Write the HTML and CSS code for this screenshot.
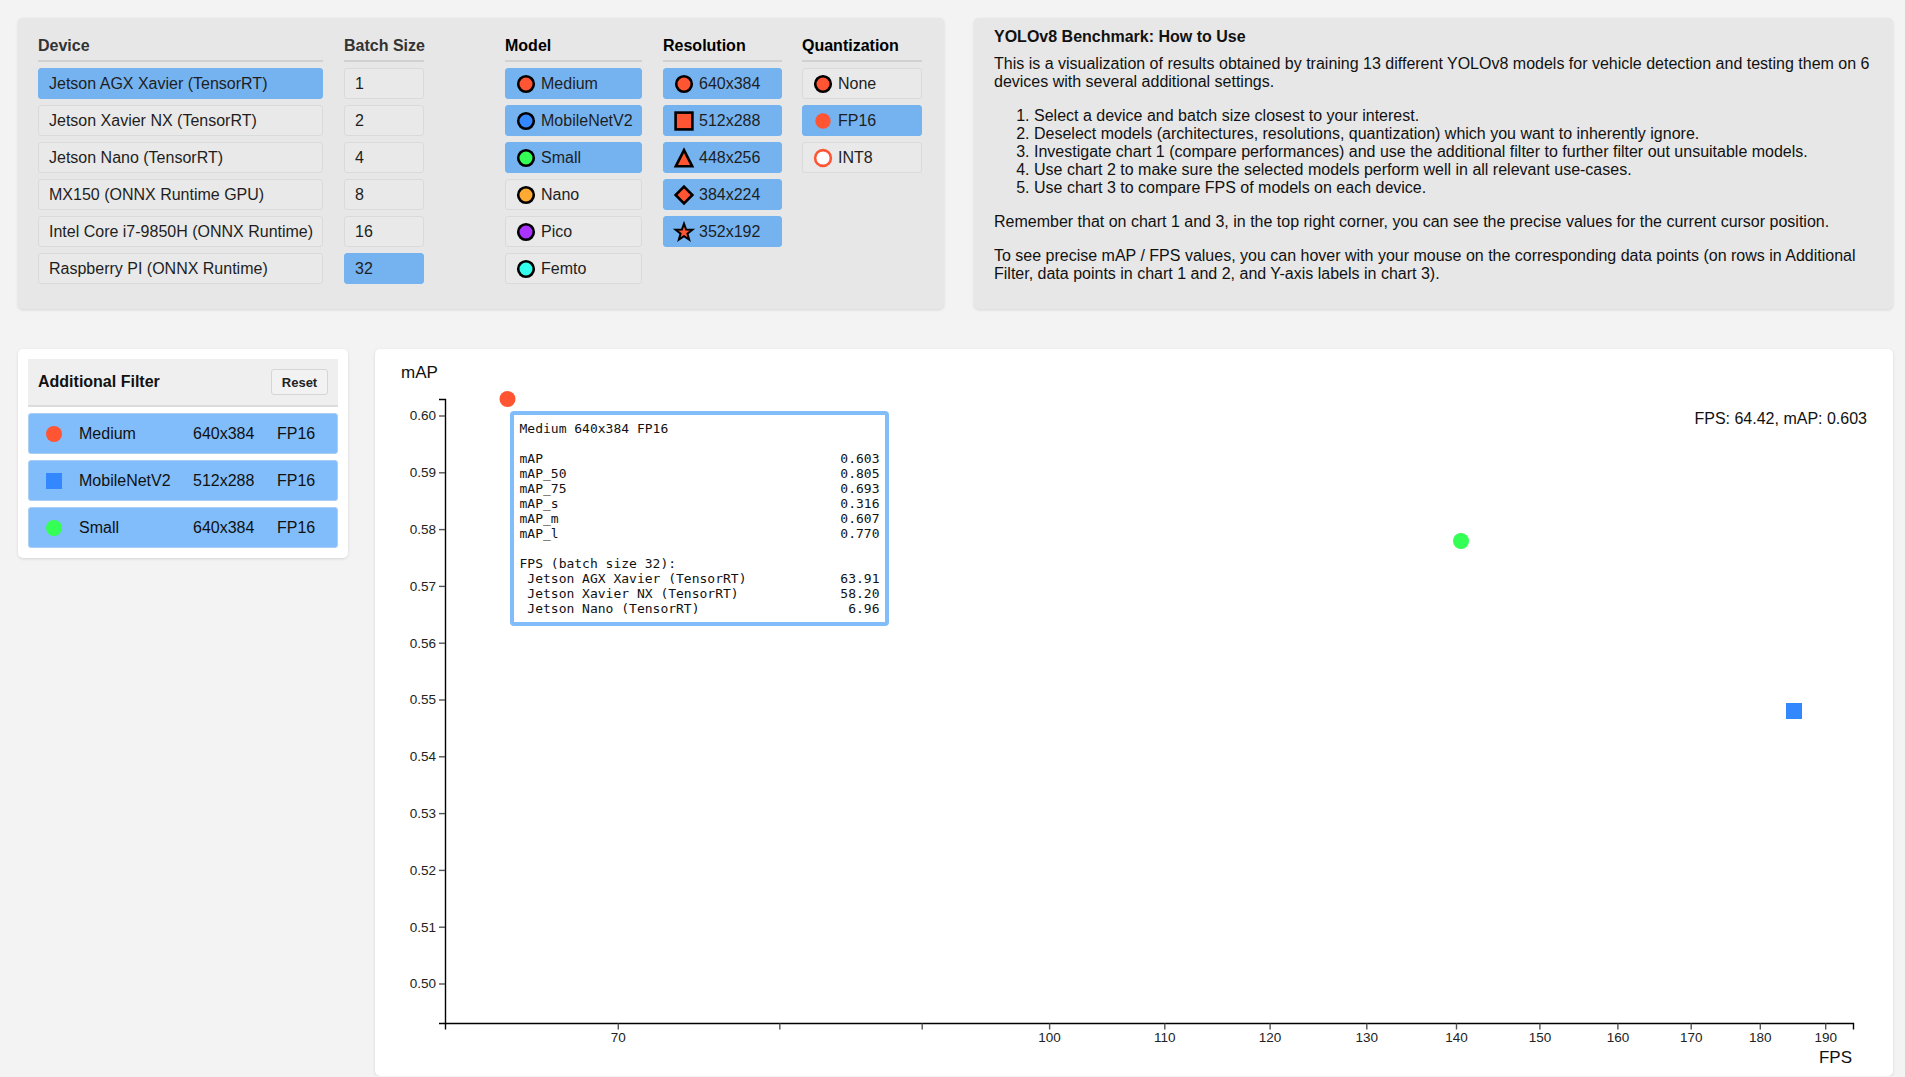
FILE: index.html
```html
<!DOCTYPE html>
<html lang="en">
<head>
<meta charset="utf-8">
<title>YOLOv8 Benchmark</title>
<link rel="stylesheet" href="styles.css">
</head>
<body>
<div class="page">
  <div class="top-row">
    <section class="selector-panel">
      <div class="col col-device">
        <div class="col-head head-muted">Device</div>
        <button class="opt on">Jetson AGX Xavier (TensorRT)</button>
        <button class="opt">Jetson Xavier NX (TensorRT)</button>
        <button class="opt">Jetson Nano (TensorRT)</button>
        <button class="opt">MX150 (ONNX Runtime GPU)</button>
        <button class="opt">Intel Core i7-9850H (ONNX Runtime)</button>
        <button class="opt">Raspberry PI (ONNX Runtime)</button>
      </div>
      <div class="col col-batch">
        <div class="col-head head-muted">Batch Size</div>
        <button class="opt">1</button>
        <button class="opt">2</button>
        <button class="opt">4</button>
        <button class="opt">8</button>
        <button class="opt">16</button>
        <button class="opt on">32</button>
      </div>
      <div class="col col-model">
        <div class="col-head">Model</div>
        <button class="opt on"><svg class="ico" viewBox="0 0 20 20"><circle cx="10" cy="10" r="7.8" fill="#ff5533" stroke="#000" stroke-width="2.6"/></svg>Medium</button>
        <button class="opt on"><svg class="ico" viewBox="0 0 20 20"><circle cx="10" cy="10" r="7.8" fill="#3388ff" stroke="#000" stroke-width="2.6"/></svg>MobileNetV2</button>
        <button class="opt on"><svg class="ico" viewBox="0 0 20 20"><circle cx="10" cy="10" r="7.8" fill="#33ff55" stroke="#000" stroke-width="2.6"/></svg>Small</button>
        <button class="opt"><svg class="ico" viewBox="0 0 20 20"><circle cx="10" cy="10" r="7.8" fill="#ffaa33" stroke="#000" stroke-width="2.6"/></svg>Nano</button>
        <button class="opt"><svg class="ico" viewBox="0 0 20 20"><circle cx="10" cy="10" r="7.8" fill="#aa33ff" stroke="#000" stroke-width="2.6"/></svg>Pico</button>
        <button class="opt"><svg class="ico" viewBox="0 0 20 20"><circle cx="10" cy="10" r="7.8" fill="#33ffee" stroke="#000" stroke-width="2.6"/></svg>Femto</button>
      </div>
      <div class="col col-res">
        <div class="col-head">Resolution</div>
        <button class="opt on"><svg class="ico" viewBox="0 0 20 20"><circle cx="10" cy="10" r="7.8" fill="#ff5533" stroke="#000" stroke-width="2.6"/></svg>640x384</button>
        <button class="opt on"><svg class="ico" viewBox="0 0 20 20"><rect x="1.6" y="1.6" width="16.8" height="16.8" fill="#ff5533" stroke="#000" stroke-width="2.6"/></svg>512x288</button>
        <button class="opt on"><svg class="ico" viewBox="0 0 20 20"><polygon points="10,2.2 18.2,18.3 1.8,18.3" fill="#ff5533" stroke="#000" stroke-width="2.6" stroke-linejoin="miter"/></svg>448x256</button>
        <button class="opt on"><svg class="ico" viewBox="0 0 20 20"><polygon points="10,1.6 18.4,10 10,18.4 1.6,10" fill="#ff5533" stroke="#000" stroke-width="2.6"/></svg>384x224</button>
        <button class="opt on"><svg class="ico" viewBox="0 0 20 20"><polygon points="10,1.7 12.12,7.59 18.37,7.78 13.42,11.61 15.17,17.62 10,14.1 4.83,17.62 6.58,11.61 1.63,7.78 7.88,7.59" fill="#ff5533" stroke="#000" stroke-width="2"/></svg>352x192</button>
      </div>
      <div class="col col-quant">
        <div class="col-head">Quantization</div>
        <button class="opt"><svg class="ico" viewBox="0 0 20 20"><circle cx="10" cy="10" r="7.8" fill="#ff5533" stroke="#000" stroke-width="2.6"/></svg>None</button>
        <button class="opt on"><svg class="ico" viewBox="0 0 20 20"><circle cx="10" cy="10" r="7.7" fill="#ff5533"/></svg>FP16</button>
        <button class="opt"><svg class="ico" viewBox="0 0 20 20"><circle cx="10" cy="10" r="7.9" fill="#fff" stroke="#ff5533" stroke-width="2.6"/></svg>INT8</button>
      </div>
    </section>
    <section class="info-panel">
      <h3 class="info-title">YOLOv8 Benchmark: How to Use</h3>
      <p>This is a visualization of results obtained by training 13 different YOLOv8 models for vehicle detection and testing them on 6 devices with several additional settings.</p>
      <ol>
        <li>Select a device and batch size closest to your interest.</li>
        <li>Deselect models (architectures, resolutions, quantization) which you want to inherently ignore.</li>
        <li>Investigate chart 1 (compare performances) and use the additional filter to further filter out unsuitable models.</li>
        <li>Use chart 2 to make sure the selected models perform well in all relevant use-cases.</li>
        <li>Use chart 3 to compare FPS of models on each device.</li>
      </ol>
      <p>Remember that on chart 1 and 3, in the top right corner, you can see the precise values for the current cursor position.</p>
      <p>To see precise mAP / FPS values, you can hover with your mouse on the corresponding data points (on rows in Additional Filter, data points in chart 1 and 2, and Y-axis labels in chart 3).</p>
    </section>
  </div>

  <div class="bottom-row">
    <section class="filter-panel">
      <div class="filter-head">
        <span>Additional Filter</span>
        <button class="reset">Reset</button>
      </div>
      <div class="filter-rows">
        <div class="frow"><span class="mark dot-medium"></span><span>Medium</span><span>640x384</span><span>FP16</span></div>
        <div class="frow"><span class="mark sq-mobile"></span><span>MobileNetV2</span><span>512x288</span><span>FP16</span></div>
        <div class="frow"><span class="mark dot-small"></span><span>Small</span><span>640x384</span><span>FP16</span></div>
      </div>
    </section>

    <section class="chart-panel">
      <svg class="chart" width="1518" height="727" viewBox="0 0 1518 727">
        <text class="axis-title" x="26" y="29">mAP</text>
        <text class="readout" x="1492" y="75" text-anchor="end">FPS: 64.42, mAP: 0.603</text>

        <!-- y axis -->
        <path class="domain" d="M64,50.5H70.5V674.5H64"/>
        <g class="yticks">
          <line x1="64" x2="70" y1="67" y2="67"/><text x="61" y="67" dy="0.32em">0.60</text>
          <line x1="64" x2="70" y1="123.8" y2="123.8"/><text x="61" y="123.8" dy="0.32em">0.59</text>
          <line x1="64" x2="70" y1="180.6" y2="180.6"/><text x="61" y="180.6" dy="0.32em">0.58</text>
          <line x1="64" x2="70" y1="237.4" y2="237.4"/><text x="61" y="237.4" dy="0.32em">0.57</text>
          <line x1="64" x2="70" y1="294.2" y2="294.2"/><text x="61" y="294.2" dy="0.32em">0.56</text>
          <line x1="64" x2="70" y1="351" y2="351"/><text x="61" y="351" dy="0.32em">0.55</text>
          <line x1="64" x2="70" y1="407.8" y2="407.8"/><text x="61" y="407.8" dy="0.32em">0.54</text>
          <line x1="64" x2="70" y1="464.6" y2="464.6"/><text x="61" y="464.6" dy="0.32em">0.53</text>
          <line x1="64" x2="70" y1="521.4" y2="521.4"/><text x="61" y="521.4" dy="0.32em">0.52</text>
          <line x1="64" x2="70" y1="578.2" y2="578.2"/><text x="61" y="578.2" dy="0.32em">0.51</text>
          <line x1="64" x2="70" y1="635" y2="635"/><text x="61" y="635" dy="0.32em">0.50</text>
        </g>

        <!-- x axis (log scale) -->
        <path class="domain" d="M70.5,680.5V674.5H1478.5V680.5"/>
        <g class="xticks">
          <line x1="243.3" x2="243.3" y1="674.5" y2="680.5"/><text x="243.3" y="683.5" dy="0.71em">70</text>
          <line x1="404.8" x2="404.8" y1="674.5" y2="680.5"/>
          <line x1="547.2" x2="547.2" y1="674.5" y2="680.5"/>
          <line x1="674.6" x2="674.6" y1="674.5" y2="680.5"/><text x="674.6" y="683.5" dy="0.71em">100</text>
          <line x1="789.8" x2="789.8" y1="674.5" y2="680.5"/><text x="789.8" y="683.5" dy="0.71em">110</text>
          <line x1="895.1" x2="895.1" y1="674.5" y2="680.5"/><text x="895.1" y="683.5" dy="0.71em">120</text>
          <line x1="991.8" x2="991.8" y1="674.5" y2="680.5"/><text x="991.8" y="683.5" dy="0.71em">130</text>
          <line x1="1081.5" x2="1081.5" y1="674.5" y2="680.5"/><text x="1081.5" y="683.5" dy="0.71em">140</text>
          <line x1="1164.9" x2="1164.9" y1="674.5" y2="680.5"/><text x="1164.9" y="683.5" dy="0.71em">150</text>
          <line x1="1242.9" x2="1242.9" y1="674.5" y2="680.5"/><text x="1242.9" y="683.5" dy="0.71em">160</text>
          <line x1="1316.2" x2="1316.2" y1="674.5" y2="680.5"/><text x="1316.2" y="683.5" dy="0.71em">170</text>
          <line x1="1385.3" x2="1385.3" y1="674.5" y2="680.5"/><text x="1385.3" y="683.5" dy="0.71em">180</text>
          <line x1="1450.7" x2="1450.7" y1="674.5" y2="680.5"/><text x="1450.7" y="683.5" dy="0.71em">190</text>
        </g>
        <text class="axis-title" x="1477" y="714" text-anchor="end">FPS</text>

        <!-- data points -->
        <circle cx="132.5" cy="50" r="8" fill="#ff5533"/>
        <circle cx="1086" cy="192" r="8" fill="#33ff55"/>
        <rect x="1411" y="354" width="16" height="16" fill="#3388ff"/>
      </svg>

      <div class="tooltip">
        <div class="tt-row"><span>Medium 640x384 FP16</span></div>
        <div class="tt-gap"></div>
        <div class="tt-row"><span>mAP</span><span>0.603</span></div>
        <div class="tt-row"><span>mAP_50</span><span>0.805</span></div>
        <div class="tt-row"><span>mAP_75</span><span>0.693</span></div>
        <div class="tt-row"><span>mAP_s</span><span>0.316</span></div>
        <div class="tt-row"><span>mAP_m</span><span>0.607</span></div>
        <div class="tt-row"><span>mAP_l</span><span>0.770</span></div>
        <div class="tt-gap"></div>
        <div class="tt-row"><span>FPS (batch size 32):</span></div>
        <div class="tt-row"><span> Jetson AGX Xavier (TensorRT)</span><span>63.91</span></div>
        <div class="tt-row"><span> Jetson Xavier NX (TensorRT)</span><span>58.20</span></div>
        <div class="tt-row"><span> Jetson Nano (TensorRT)</span><span>6.96</span></div>
      </div>
    </section>
  </div>
</div>
</body>
</html>
```

FILE: styles.css
```css
html, body {
  margin: 0;
  padding: 0;
}

body {
  background: #f3f3f3;
  font-family: "Liberation Sans", Arial, sans-serif;
  font-size: 16px;
  color: #1a1a1a;
}

.page {
  padding: 18px 12px 0 18px;
}

/* ---------- top row ---------- */
.top-row {
  display: flex;
  gap: 30px;
  align-items: stretch;
}

.selector-panel {
  flex: none;
  width: 926px;
  box-sizing: border-box;
  background: #e7e7e7;
  border-radius: 5px;
  padding: 19px 20px 25px;
  display: flex;
  align-items: flex-start;
  gap: 21px;
  box-shadow: 0 1px 3px rgba(0, 0, 0, 0.12);
}

.col {
  display: flex;
  flex-direction: column;
  gap: 6px;
}

.col-device { width: 285px; }
.col-batch { width: 80px; }
.col-model { width: 137px; margin-left: 60px; }
.col-res { width: 119px; }
.col-quant { width: 120px; margin-left: -1px; }

.col-head {
  font-weight: bold;
  font-size: 16px;
  line-height: 18px;
  padding-bottom: 5px;
  border-bottom: 2px solid #d1d1d1;
  color: #000;
  white-space: nowrap;
}

.head-muted {
  color: #333;
}

.opt {
  height: 31px;
  box-sizing: border-box;
  border: 1px solid #dadada;
  background: #e9e9e9;
  border-radius: 3px;
  padding: 0 10px;
  margin: 0;
  display: flex;
  align-items: center;
  gap: 5px;
  font-family: "Liberation Sans", Arial, sans-serif;
  font-size: 16px;
  color: #1e1e1e;
  text-align: left;
  white-space: nowrap;
}

.opt.on {
  background: #74b3f0;
  border-color: #74b3f0;
}

.ico {
  width: 20px;
  height: 20px;
  flex: none;
  overflow: visible;
}

.info-panel {
  flex: 1;
  min-width: 0;
  background: #e7e7e7;
  border-radius: 5px;
  padding: 10px 20px;
  color: #111;
  font-size: 16px;
  box-shadow: 0 1px 3px rgba(0, 0, 0, 0.12);
}

.info-title {
  font-size: 16px;
  font-weight: bold;
  margin: 0 0 9px;
}

.info-panel p {
  margin: 0 0 16px;
}

.info-panel ol {
  margin: 16px 0;
  padding-left: 40px;
  line-height: 18px;
}

/* ---------- bottom row ---------- */
.bottom-row {
  display: flex;
  gap: 27px;
  margin-top: 40px;
  align-items: flex-start;
}

.filter-panel {
  flex: none;
  width: 330px;
  box-sizing: border-box;
  background: #fff;
  border-radius: 5px;
  padding: 10px;
  box-shadow: 0 1px 3px rgba(0, 0, 0, 0.12);
}

.filter-head {
  height: 46px;
  background: #efefef;
  border-bottom: 2px solid #dcdcdc;
  display: flex;
  align-items: center;
  justify-content: space-between;
  padding: 0 10px;
  font-weight: bold;
  font-size: 16px;
  color: #111;
}

.reset {
  width: 57px;
  height: 26px;
  box-sizing: border-box;
  border: 1px solid #d6d6d6;
  background: #f2f2f2;
  border-radius: 3px;
  font-family: "Liberation Sans", Arial, sans-serif;
  font-weight: bold;
  font-size: 13px;
  color: #222;
  padding: 0;
}

.filter-rows {
  display: flex;
  flex-direction: column;
  gap: 6px;
  margin-top: 6px;
}

.frow {
  height: 41px;
  box-sizing: border-box;
  background: #80bdfa;
  border: 1px solid #a9cff4;
  border-radius: 3px;
  display: grid;
  grid-template-columns: 16px 97px 67px auto;
  column-gap: 17px;
  align-items: center;
  padding-left: 17px;
  font-size: 16px;
  color: #111;
}

.mark {
  width: 16px;
  height: 16px;
  display: block;
}

.dot-medium { background: #ff5533; border-radius: 50%; }
.dot-small { background: #33ff55; border-radius: 50%; }
.sq-mobile { background: #3388ff; }

.chart-panel {
  flex: 1;
  min-width: 0;
  height: 727px;
  background: #fff;
  border-radius: 5px;
  position: relative;
  box-shadow: 0 1px 3px rgba(0, 0, 0, 0.12);
}

.chart {
  display: block;
  overflow: visible;
  font-family: "Liberation Sans", Arial, sans-serif;
}

.chart .domain {
  fill: none;
  stroke: #000;
  stroke-width: 1.4;
}

.chart .yticks line,
.chart .xticks line {
  stroke: #555;
  stroke-width: 1.4;
}

.chart .yticks text {
  font-size: 13.5px;
  fill: #222;
  text-anchor: end;
}

.chart .xticks text {
  font-size: 13.5px;
  fill: #222;
  text-anchor: middle;
}

.chart .axis-title {
  font-size: 17px;
  fill: #111;
}

.chart .readout {
  font-size: 16px;
  fill: #111;
}

.tooltip {
  position: absolute;
  left: 135px;
  top: 62px;
  width: 379px;
  box-sizing: border-box;
  border: 4px solid #80bdfa;
  border-radius: 4px;
  background: #fff;
  padding: 6px 5.5px;
  font-family: "DejaVu Sans Mono", "Liberation Mono", monospace;
  font-size: 13px;
  line-height: 15px;
  color: #111;
}

.tt-row {
  display: flex;
  justify-content: space-between;
  white-space: pre;
}

.tt-gap {
  height: 15px;
}
```
